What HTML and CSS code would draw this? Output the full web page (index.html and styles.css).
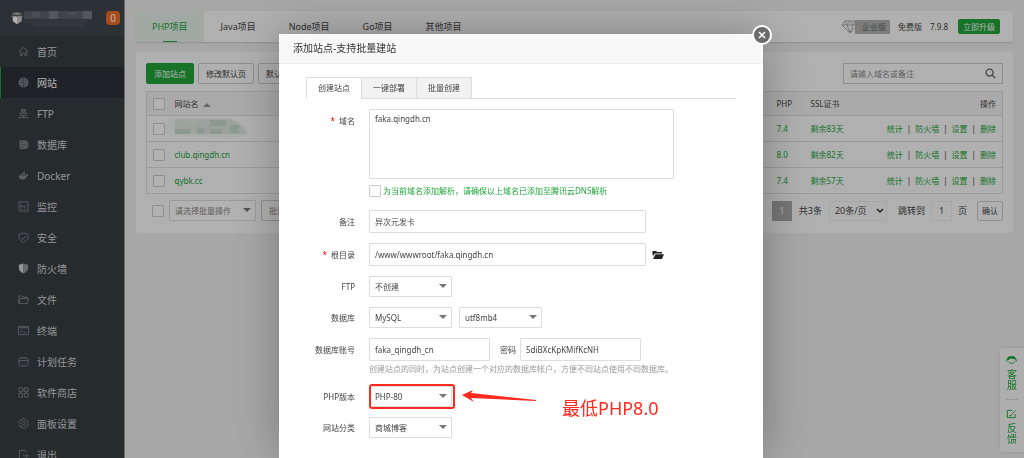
FILE: index.html
```
<!DOCTYPE html>
<html lang="zh-CN">
<head>
    <meta charset="UTF-8">
    <title>网站</title>
    <link rel="stylesheet" href="styles.css">
</head>
<body>
    <div class="layout">
        <aside class="sidebar">
            <div class="server">
                <svg class="server-logo" viewBox="0 0 14 14"><path d="M7 1L12 2.500 10.500 4 13 5 12 6.500V10L7 13.500 2.500 10V6.500L1 5 3.500 4 1.500 2.500Z" fill="#a5a5a5"/><path d="M3 6L7 5V13L3 10Z" fill="#fff"/><path d="M7 5L11 6V10L7 13Z" fill="#ccc"/><path d="M2 3.500L7 5 12 3.500" stroke="#444" fill="none"/></svg>
                <svg class="server-name" viewBox="0 0 68 18"><path fill="#5d6267" d="M0 0H68V8H0Z"/><path fill="#797d81" d="M25 0H34V8H25ZM59 0H68V8H59Z"/><path fill="#6b7074" d="M8 1H16V6H8ZM45 1H52V4H45Z"/><path fill="#4a5055" d="M2 9H64V12H2ZM9 12H60V16H9Z"/></svg>
                <span class="msg-count">0</span>
            </div>
            <ul class="menu">
                <li><a href="#"><svg viewBox="0 0 12 12"><path d="M1 6L6 1.500 11 6M2.500 5V10.500H4.500V7.500H7.500V10.500H9.500V5"/></svg>首页</a></li>
                <li class="current"><a href="#"><svg viewBox="0 0 12 12"><circle cx="6" cy="6" r="5" fill="#8f9499"/><path class="cut" d="M1 6H11M6 1V11M2 3.500H10M2 8.500H10M6 1Q1.500 6 6 11Q10.500 6 6 1"/></svg>网站</a></li>
                <li><a href="#"><svg viewBox="0 0 12 12"><path d="M4 1.500H8V4.500H4ZM2.500 5.500H9.500V8H2.500ZM6 8V10.500M0.500 10.500H11.500M4 3H8"/></svg>FTP</a></li>
                <li><a href="#"><svg viewBox="0 0 12 12"><path class="solid" d="M2 1.500H9L10 3V10L8 11H2.500L1.500 9.500V2.500Z"/><path class="cut" d="M2 4H8M2 6.500H9M2 9H8"/><path d="M11 3V10"/></svg>数据库</a></li>
                <li><a href="#"><svg viewBox="0 0 12 12"><path class="solid" d="M0.500 6H8.500Q8.500 4.500 9.500 4Q10 5 11.500 5.500Q11 7 9.500 7Q8 10.500 4.500 10.500Q1 10.500 0.500 6ZM3 4H8V5.500H3ZM5.500 2H7.500V3.500H5.500Z"/></svg>Docker</a></li>
                <li><a href="#"><svg viewBox="0 0 12 12"><path d="M1 1H11V11H1ZM3 3V7L5 5 7 7.500 9 4M3 9H5M7 9H9"/></svg>监控</a></li>
                <li><a href="#"><svg viewBox="0 0 12 12"><path d="M6 1L11 2.500V6Q10.500 9.500 6 11.500Q1.500 9.500 1 6V2.500ZM3.500 6L5.500 8 8.500 4.500"/></svg>安全</a></li>
                <li><a href="#"><svg viewBox="0 0 12 12"><path fill="#d2d4d6" stroke="none" d="M6 0.500V11.500Q1.500 9.500 1 6V2Z"/><path fill="#96999c" stroke="none" d="M6 0.500L11 2V6Q10.500 9.500 6 11.500Z"/></svg>防火墙</a></li>
                <li><a href="#"><svg viewBox="0 0 12 12"><path d="M1 10.500V2H4.500L5.500 3.500H10V5M1 10.500L2.500 5H11.500L10 10.500Z"/></svg>文件</a></li>
                <li><a href="#"><svg viewBox="0 0 12 12"><path d="M0.500 1.500H11.500V10.500H0.500ZM1 3H11M3 5L4.500 6.500 3 8M6 8H8.500"/></svg>终端</a></li>
                <li><a href="#"><svg viewBox="0 0 12 12"><path d="M2.500 2H9.500L11 3.500V9.500L9.500 11H2.500L1 9.500V3.500ZM1 5H11M3.500 1V3M8.500 1V3M4 9H5M7 9H8"/></svg>计划任务</a></li>
                <li><a href="#"><svg viewBox="0 0 12 12"><path d="M1 1H5V5H1ZM7 1H11V5H7ZM1 7H5V11H1ZM7 7H11V11H7ZM3 5V7M5 3H7M9 5V7"/></svg>软件商店</a></li>
                <li><a href="#"><svg viewBox="0 0 12 12"><path d="M4.500 1H7.500L8 2.500 10 2.500 11 5 10.500 6 11 7.500 9.500 9.500 8 9.500 7.500 11H4.500L4 9.500 2 9.500 1 7 1.500 6 1 4.500 2.500 2.500 4 2.500Z"/><circle cx="6" cy="6" r="2"/></svg>面板设置</a></li>
                <li><a href="#"><svg viewBox="0 0 12 12"><path d="M8.500 4V1.500H1.500V10.500H7M5 7.500H11M9 5.500L11 7.500 9 9.500"/></svg>退出</a></li>
            </ul>
        </aside>

        <main class="main">
            <header class="card topbar">
                <nav class="project-tabs">
                    <a href="#" class="on">PHP项目</a>
                    <a href="#">Java项目</a>
                    <a href="#">Node项目</a>
                    <a href="#">Go项目</a>
                    <a href="#">其他项目</a>
                </nav>
                <div class="edition">
                    <svg class="diamond" viewBox="0 0 18 14"><path d="M4 1H14L17 5 9 13 1 5ZM1 5H17M4 1L6 5 9 13 12 5 14 1M6 5L9 1 12 5"/></svg>
                    <span class="enterprise">企业版</span>
                    <span class="free">免费版</span>
                    <span class="version">7.9.8</span>
                    <button class="btn btn-green btn-small">立即升级</button>
                </div>
            </header>

            <section class="card sites">
                <div class="toolbar">
                    <button class="btn btn-green">添加站点</button>
                    <button class="btn">修改默认页</button>
                    <button class="btn">默认站点</button>
                    <div class="search">
                        <input type="text" placeholder="请输入域名或备注" aria-label="搜索">
                        <svg viewBox="0 0 12 12"><circle cx="5" cy="5" r="3.800"/><path d="M8 8L11 11"/></svg>
                    </div>
                </div>
                <table class="site-table">
                    <thead>
                        <tr>
                            <th class="col-check"><input type="checkbox" aria-label="全选"></th>
                            <th class="col-name">网站名 <i class="sort"></i></th>
                            <th class="col-php">PHP</th>
                            <th class="col-ssl">SSL证书</th>
                            <th class="col-ops">操作</th>
                        </tr>
                    </thead>
                    <tbody>
                        <tr>
                            <td><input type="checkbox" aria-label="选择"></td>
                            <td class="masked"><svg viewBox="0 0 86 24"><path d="M2 8Q6 0 30 1L66 2Q86 8 85 17Q70 24 40 20L6 19Q-2 15 2 8Z" fill="#f5f8f6"/><path d="M11 2H66L76 7 83 17H11Z" fill="#dfe8e3"/><path d="M11 12H26V17H11ZM46 3H62V9H46ZM33 11H40V17H33ZM46 12H58V17H46ZM66 8H75V16H66Z" fill="#c9dcd2"/><path d="M18 3H33V8H18ZM27 12H32V17H27Z" fill="#e3ece0"/></svg></td>
                            <td><a href="#">7.4</a></td>
                            <td><a href="#">剩余83天</a></td>
                            <td class="ops"><a href="#">统计</a><span>|</span><a href="#">防火墙</a><span>|</span><a href="#">设置</a><span>|</span><a href="#">删除</a></td>
                        </tr>
                        <tr>
                            <td><input type="checkbox" aria-label="选择"></td>
                            <td><a href="#">club.qingdh.cn</a></td>
                            <td><a href="#">8.0</a></td>
                            <td><a href="#">剩余82天</a></td>
                            <td class="ops"><a href="#">统计</a><span>|</span><a href="#">防火墙</a><span>|</span><a href="#">设置</a><span>|</span><a href="#">删除</a></td>
                        </tr>
                        <tr>
                            <td><input type="checkbox" aria-label="选择"></td>
                            <td><a href="#">qybk.cc</a></td>
                            <td><a href="#">7.4</a></td>
                            <td><a href="#">剩余57天</a></td>
                            <td class="ops"><a href="#">统计</a><span>|</span><a href="#">防火墙</a><span>|</span><a href="#">设置</a><span>|</span><a href="#">删除</a></td>
                        </tr>
                    </tbody>
                </table>
                <div class="table-foot">
                    <input type="checkbox" aria-label="全选">
                    <span class="select batch"><select aria-label="批量操作"><option>请选择批量操作</option></select></span>
                    <button class="btn btn-muted">批量操作</button>
                    <div class="pager">
                        <span class="page-now">1</span>
                        <span class="total">共3条</span>
                        <span class="page-size">
                            <select aria-label="每页条数"><option>20条/页</option></select>
                            <svg viewBox="0 0 8 6"><path d="M1 1L4 4 7 1"/></svg>
                        </span>
                        <label for="page-jump">跳转到</label>
                        <input type="text" id="page-jump" value="1">
                        <span class="unit">页</span>
                        <button class="btn btn-ok">确认</button>
                    </div>
                </div>
            </section>
        </main>
    </div>

    <div class="service">
        <a href="#"><svg viewBox="0 0 12 10"><path d="M1 5Q1 0.500 6 0.500Q11 0.500 11 5L9 4Q7 4 5 3Q4 4 3 5Z" fill="#20a53a" stroke="none"/><path d="M1 4V7M11 4V7M3 7Q6 10.500 9 7"/></svg>客服</a>
        <a href="#"><svg viewBox="0 0 12 10"><path d="M7 1H1.500V9H10V5M5 6.500L10.500 1M3.500 7H6"/></svg>反馈</a>
    </div>

    <div class="shade">
        <div class="dialog" role="dialog" aria-label="添加站点">
            <button class="close" aria-label="关闭"><svg viewBox="0 0 10 10"><path d="M2 2L8 8M8 2L2 8"/></svg></button>
            <div class="dialog-title">添加站点-支持批量建站</div>
            <div class="dialog-body">
                <div class="tabs">
                    <button class="on">创建站点</button>
                    <button>一键部署</button>
                    <button>批量创建</button>
                </div>
                <form class="form">
                    <div class="line line-top">
                        <label class="name required" for="domain">域名</label>
                        <div class="field-stack">
                            <textarea id="domain">faka.qingdh.cn</textarea>
                            <label class="dns"><input type="checkbox">为当前域名添加解析，请确保以上域名已添加至腾讯云DNS解析</label>
                        </div>
                    </div>
                    <div class="line">
                        <label class="name" for="remark">备注</label>
                        <input class="long" type="text" id="remark" value="异次元发卡">
                    </div>
                    <div class="line">
                        <label class="name required" for="path">根目录</label>
                        <input class="long" type="text" id="path" value="/www/wwwroot/faka.qingdh.cn">
                        <svg class="folder" viewBox="0 0 12 10"><path d="M0.500 4V1H4L5 2H10V3.500H3L1 6Z"/><path d="M3.500 4.200H12L10 9H1Z"/></svg>
                    </div>
                    <div class="line">
                        <label class="name" for="ftp">FTP</label>
                        <span class="select"><select id="ftp"><option>不创建</option></select></span>
                    </div>
                    <div class="line">
                        <label class="name" for="db">数据库</label>
                        <span class="select"><select id="db"><option>MySQL</option></select></span>
                        <span class="select charset"><select aria-label="编码"><option>utf8mb4</option></select></span>
                    </div>
                    <div class="line">
                        <label class="name" for="db-user">数据库账号</label>
                        <input class="short" type="text" id="db-user" value="faka_qingdh_cn">
                        <label class="password" for="db-pass">密码</label>
                        <input class="short" type="text" id="db-pass" value="5diBXcKpKMifKcNH">
                    </div>
                    <p class="hint">创建站点的同时，为站点创建一个对应的数据库帐户，方便不同站点使用不同数据库。</p>
                    <div class="line">
                        <label class="name" for="php">PHP版本</label>
                        <span class="select marked"><select id="php"><option>PHP-80</option></select></span>
                        <div class="note">
                            <svg viewBox="0 0 74 14"><path d="M0 5L11 0 9 3 74 10 74 11 9 8 12 12Z"/></svg>
                            <span>最低PHP8.0</span>
                        </div>
                    </div>
                    <div class="line">
                        <label class="name" for="type">网站分类</label>
                        <span class="select"><select id="type"><option>商城博客</option></select></span>
                    </div>
                </form>
            </div>
        </div>
    </div>
</body>
</html>
```
FILE: styles.css
```
* {
    box-sizing: border-box;
}

body {
    margin: 0;
    height: 100vh;
    overflow: hidden;
    background: #f0f0f0;
    color: #444;
    font: 8px/12px "Noto Sans", "Noto Sans CJK SC", sans-serif;
}

button,
input,
select,
textarea {
    margin: 0;
    font: inherit;
    color: inherit;
}

a {
    color: #20a53a;
    text-decoration: none;
}

svg {
    display: block;
    flex: none;
    fill: none;
}

.layout {
    display: flex;
    height: 100vh;
}

/* sidebar */
.sidebar {
    flex: none;
    width: 125px;
    overflow: hidden;
    background: #373e43;
    border-right: 1px solid #999;
}

.server {
    display: flex;
    align-items: center;
    height: 36px;
    padding: 0 4px 0 10px;
    background: #3e474d;
}

.server-logo {
    width: 14px;
    height: 14px;
}

.server-name {
    width: 68px;
    height: 18px;
    margin-top: 4px;
}

.msg-count {
    width: 14px;
    margin-left: auto;
    border-radius: 4px;
    background: #f26a26;
    color: #fff;
    font-size: 10px;
    line-height: 14px;
    text-align: center;
}

.menu {
    margin: 0;
    padding: 0;
    list-style: none;
}

.menu a {
    display: flex;
    align-items: center;
    gap: 8px;
    height: 31px;
    padding-left: 18px;
    color: #d4d6d8;
    font-size: 10px;
}

.menu .current a {
    padding-left: 17px;
    border-left: 1px solid #20a53a;
    background: #2c3035;
    color: #fff;
}

.menu svg {
    width: 11px;
    height: 11px;
    stroke: #82878b;
    stroke-width: 1;
}

.menu .solid {
    fill: #82878b;
    stroke: none;
}

.menu .cut {
    stroke: #33383d;
    stroke-width: 0.5;
}

/* page */
.main {
    flex: 1;
    padding: 11px 11px 0;
}

.card {
    background: #fcfcfc;
    border-radius: 3px;
}

.topbar {
    display: flex;
    justify-content: space-between;
    height: 31px;
    margin-bottom: 10px;
    padding-right: 13px;
    box-shadow: 0 1px 2px #ccc;
}

.project-tabs {
    display: flex;
    gap: 1px;
}

.project-tabs a {
    padding: 0 16px;
    color: #444;
    font-size: 9px;
    line-height: 31px;
}

.project-tabs .on {
    position: relative;
    background: #e8f2eb;
    color: #20a53a;
}

.project-tabs .on::after {
    content: "";
    position: absolute;
    left: 50%;
    bottom: 0;
    width: 14px;
    height: 1px;
    margin-left: -7px;
    background: #20a53a;
}

.edition {
    display: flex;
    align-items: center;
}

.diamond {
    z-index: 1;
    width: 18px;
    height: 14px;
    stroke: #777;
}

.enterprise {
    margin-left: -4px;
    padding: 0 4px 0 7px;
    background: #b4b4b4;
    color: #666;
    line-height: 14px;
}

.free {
    margin-left: 8px;
}

.version {
    margin: 0 10px 0 8px;
}

.btn {
    height: 21px;
    padding: 0 7px;
    border: 1px solid #ccc;
    border-radius: 2px;
    background: #fcfcfc;
    line-height: 12px;
    white-space: nowrap;
    cursor: pointer;
}

.btn-green {
    border-color: #20a53a;
    background: #20a53a;
    color: #fff;
}

.btn-small {
    height: 15px;
    padding: 0 4px;
}

.sites {
    padding: 11px 10px 12px;
}

.toolbar {
    display: flex;
    gap: 4px;
    margin-bottom: 7px;
}

.search {
    display: flex;
    align-items: center;
    width: 160px;
    height: 21px;
    margin-left: auto;
    padding: 0 6px;
    border: 1px solid #ccc;
}

.search input {
    flex: 1;
    min-width: 0;
    padding: 0;
    border: 0;
    background: none;
}

.search input::placeholder {
    color: #888;
}

.search svg {
    width: 11px;
    height: 11px;
    stroke: #666;
    stroke-width: 1.5;
}

input[type="checkbox"] {
    display: block;
    flex: none;
    appearance: none;
    width: 12px;
    height: 12px;
    border: 1px solid #ccc;
    border-radius: 1px;
    background: #fff;
}

.site-table {
    width: 100%;
    border: 1px solid #ddd;
    border-collapse: collapse;
    table-layout: fixed;
}

.site-table th,
.site-table td {
    height: 26px;
    padding: 0 6px;
    border-bottom: 1px solid #ddd;
    font-weight: normal;
    text-align: left;
}

.site-table th {
    height: 24px;
    background: #f4f4f4;
}

.site-table .col-check {
    width: 22px;
}

.site-table .col-php {
    width: 34px;
}

.site-table .col-ssl {
    width: 64px;
}

.site-table .col-ops {
    width: 134px;
    text-align: right;
}

.site-table .ops {
    text-align: right;
    white-space: nowrap;
}

.ops span {
    padding: 0 4px;
}

.sort {
    display: inline-block;
    margin-left: 2px;
    border: 4px solid transparent;
    border-top: 0;
    border-bottom-color: #999;
}

.site-table .masked {
    padding: 0;
    overflow: visible;
}

.masked svg {
    width: 86px;
    height: 24px;
    margin-left: -5px;
}

.table-foot {
    display: flex;
    align-items: center;
    gap: 5px;
    margin-top: 6px;
    padding-left: 6px;
}

.select {
    position: relative;
    width: 83px;
}

.select select {
    display: block;
    appearance: none;
    width: 100%;
    height: 21px;
    padding: 0 5px;
    border: 1px solid #ddd;
    border-radius: 1px;
    background: #fff;
}

.select::after {
    content: "";
    position: absolute;
    right: 5px;
    top: 8px;
    border: 4px solid transparent;
    border-top-color: #777;
    border-bottom: 0;
}

.batch {
    width: 87px;
    color: #888;
}

.btn-muted {
    color: #888;
}

.pager {
    display: flex;
    align-items: center;
    margin-left: auto;
    font-size: 9px;
}

.page-now {
    width: 20px;
    background: #aaa;
    color: #eee;
    line-height: 20px;
    text-align: center;
}

.total {
    padding: 0 7px;
}

.page-size {
    position: relative;
    width: 58px;
    margin-right: 11px;
}

.page-size select {
    appearance: none;
    width: 100%;
    height: 20px;
    padding: 0 5px;
    border: 1px solid #eee;
    background: none;
}

.page-size svg {
    position: absolute;
    right: 3px;
    top: 7px;
    width: 8px;
    height: 6px;
    stroke: #333;
    stroke-width: 1.5;
}

.pager input {
    width: 21px;
    height: 20px;
    margin: 0 6px;
    padding: 0;
    border: 1px solid #eee;
    background: none;
    text-align: center;
}

.btn-ok {
    height: 20px;
    margin-left: 10px;
    padding: 0 4px;
    font-size: 8px;
}

/* side service */
.service {
    position: fixed;
    right: 0;
    bottom: 6px;
    width: 24px;
    padding: 7px 6px;
    border-radius: 3px 0 0 3px;
    background: #fafafa;
    box-shadow: 0 0 3px #ccc;
}

.service a {
    display: block;
    font-size: 10px;
    line-height: 11px;
    text-align: center;
}

.service a + a {
    margin-top: 8px;
    padding-top: 9px;
    border-top: 1px solid #ddd;
}

.service svg {
    width: 11px;
    height: 10px;
    margin-bottom: 4px;
    stroke: #20a53a;
}

/* dialog */
.shade {
    position: fixed;
    inset: 0;
    display: flex;
    justify-content: center;
    padding: 34px 0 0 18px;
    background: rgba(0, 0, 0, 0.3);
}

.dialog {
    position: relative;
    width: 484px;
    border-radius: 2px 2px 0 0;
    background: #fff;
    box-shadow: 1px 1px 50px rgba(0, 0, 0, 0.3);
}

.close {
    position: absolute;
    top: -9px;
    right: -9px;
    width: 20px;
    height: 20px;
    padding: 3px;
    border: 2px solid #fff;
    border-radius: 50%;
    background: #6b6b6b;
    cursor: pointer;
}

.close svg {
    width: 10px;
    height: 10px;
    stroke: #fff;
    stroke-width: 1.5;
}

.dialog-title {
    padding: 0 14px;
    border-bottom: 1px solid #eee;
    background: #f8f8f8;
    color: #333;
    font-size: 10px;
    line-height: 29px;
}

.dialog-body {
    padding: 13px 27px 0;
}

.tabs {
    display: flex;
    border-bottom: 1px solid #ddd;
}

.tabs button {
    width: 56px;
    height: 22px;
    margin: 0 -1px -1px 0;
    padding: 0;
    border: 1px solid #ddd;
    background: #f2f2f2;
}

.tabs .on {
    border-bottom-color: #fff;
    background: #fff;
}

.form {
    display: flex;
    flex-direction: column;
    gap: 10px;
    margin-top: 10px;
}

.line {
    position: relative;
    display: flex;
    align-items: center;
}

.line-top {
    align-items: flex-start;
}

.name {
    width: 49px;
    margin-right: 14px;
    text-align: right;
    white-space: nowrap;
}

.line-top .name {
    margin-top: 6px;
}

.required::before {
    content: "*";
    margin-right: 4px;
    color: #f00;
}

.form input[type="text"],
.form textarea {
    display: block;
    height: 23px;
    padding: 0 5px;
    border: 1px solid #ddd;
    border-radius: 1px;
    background: #fff;
}

.form textarea {
    width: 305px;
    height: 70px;
    padding: 3px 5px;
    resize: none;
}

.dns {
    display: flex;
    align-items: center;
    gap: 2px;
    height: 16px;
    margin: 4px 0 1px;
    color: #20a53a;
}

.form .long {
    width: 277px;
}

.form .short {
    width: 121px;
}

.folder {
    width: 12px;
    height: 10px;
    margin-left: 6px;
    fill: #222;
}

.charset {
    margin-left: 7px;
}

.password {
    margin: 0 4px 0 10px;
}

.hint {
    margin: -8px 0 1px 63px;
    color: #999;
    white-space: nowrap;
}

.marked::before {
    content: "";
    position: absolute;
    inset: -2px -3px -2px 0;
    border: 2px solid #ff2a1f;
    border-radius: 3px;
    pointer-events: none;
}

.note {
    position: absolute;
    left: 156px;
    top: 4px;
    display: flex;
    align-items: flex-start;
    gap: 26px;
    color: #ff2a1f;
    font-size: 18px;
    line-height: 36px;
}

.note svg {
    width: 74px;
    height: 14px;
    fill: #ff2a1f;
}
```
